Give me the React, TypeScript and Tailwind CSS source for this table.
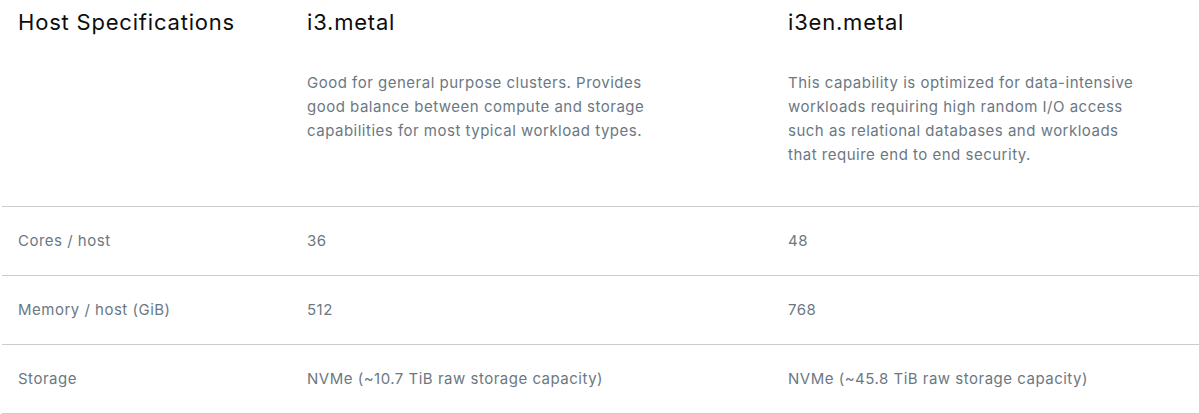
import React from "react";

const rows = [
  ["Cores / host", "36", "48"],
  ["Memory / host (GiB)", "512", "768"],
  ["Storage", "NVMe (~10.7 TiB raw storage capacity)", "NVMe (~45.8 TiB raw storage capacity)"],
];

export default function App() {
  return (
    <div className="w-[1199px] h-[414px] bg-white pl-[2px] overflow-hidden" style={{ fontFamily: 'Inter, "Open Sans", sans-serif' }}>
      <div className="grid grid-cols-[289px_481px_1fr] border-b border-[#cccccc]">
        <div className="px-4 pt-[7px] text-[22px] leading-[30px] text-[#0d0d0d] tracking-[0.8px]">Host Specifications</div>
        <div className="px-4 pt-[7px] pb-[39px]">
          <div className="text-[22px] leading-[30px] text-[#0d0d0d] tracking-[0.8px]">i3.metal</div>
          <p className="mt-[34px] w-[355px] text-[15px] leading-[24px] text-[#6b7883] tracking-[0.5px]">
            Good for general purpose clusters. Provides good balance between compute and storage capabilities for most typical workload types.
          </p>
        </div>
        <div className="px-4 pt-[7px] pb-[39px]">
          <div className="text-[22px] leading-[30px] text-[#0d0d0d] tracking-[0.8px]">i3en.metal</div>
          <p className="mt-[34px] w-[355px] text-[15px] leading-[24px] text-[#6b7883] tracking-[0.5px]">
            This capability is optimized for data-intensive workloads requiring high random I/O access such as relational databases and workloads that require end to end security.
          </p>
        </div>
      </div>
      {rows.map((r) => (
        <div key={r[0]} className="grid grid-cols-[289px_481px_1fr] h-[69px] items-center border-b border-[#cccccc] text-[15px] text-[#6b7883] tracking-[0.5px]">
          <div className="px-4">{r[0]}</div>
          <div className="px-4">{r[1]}</div>
          <div className="px-4">{r[2]}</div>
        </div>
      ))}
    </div>
  );
}
